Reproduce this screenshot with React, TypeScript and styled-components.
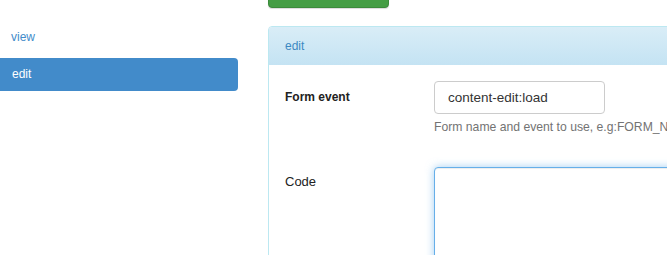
import React from "react";
import styled, { createGlobalStyle } from "styled-components";

const GlobalStyle = createGlobalStyle`
  html, body {
    margin: 0;
    padding: 0;
    overflow: hidden;
    background: #fff;
  }
  body {
    font-family: "Liberation Sans", Arial, sans-serif;
    font-size: 12px;
    line-height: 17px;
    color: #333;
  }
`;

const Page = styled.div`
  display: flex;
  align-items: flex-start;
  gap: 30px;
  width: 920px;
`;

const Sidebar = styled.ul`
  list-style: none;
  margin: 21px 0 0;
  padding: 0;
  flex: 0 0 238px;
  display: flex;
  flex-direction: column;
  gap: 4px;
`;

const NavItem = styled.li<{ $active?: boolean }>`
  height: 33px;
  display: flex;
  align-items: center;
  padding-left: ${(p) => (p.$active ? "12px" : "11px")};
  border-radius: 0 4px 4px 0;
  background: ${(p) => (p.$active ? "#428bca" : "transparent")};
  color: ${(p) => (p.$active ? "#fff" : "#428bca")};
  cursor: pointer;
`;

const Main = styled.div`
  flex: 0 0 620px;
  margin-top: -26px;
  display: flex;
  flex-direction: column;
  align-items: flex-start;
`;

const SaveButton = styled.button`
  flex-shrink: 0;
  width: 121px;
  height: 34px;
  border: 1px solid #3b8a3b;
  border-radius: 4px;
  background: #449d44;
  box-shadow: 0 1px 1px rgba(0, 0, 0, 0.15);
  color: #fff;
  font: inherit;
`;

const Panel = styled.div`
  flex-shrink: 0;
  margin-top: 18px;
  align-self: stretch;
  border: 1px solid #bce8f1;
  border-radius: 4px;
  background: #fff;
`;

const PanelHeading = styled.div`
  height: 38px;
  display: flex;
  align-items: center;
  padding: 0 16px;
  border-radius: 3px 3px 0 0;
  background: linear-gradient(to bottom, #d9edf7 0%, #c4e3f3 100%);
  color: #3d89c2;
`;

const PanelBody = styled.div`
  padding: 16px 16px 0;
`;

const FormRow = styled.div<{ $gap?: number }>`
  display: grid;
  grid-template-columns: 149px 1fr;
  margin-bottom: ${(p) => p.$gap ?? 0}px;
`;

const Label = styled.label<{ $bold?: boolean }>`
  padding-top: ${(p) => (p.$bold ? "8px" : "6px")};
  font-size: ${(p) => (p.$bold ? "12px" : "13px")};
  font-weight: ${(p) => (p.$bold ? 700 : 400)};
  color: #222;
`;

const Field = styled.div`
  display: flex;
  flex-direction: column;
  align-items: flex-start;
`;

const TextInput = styled.input`
  box-sizing: border-box;
  width: 171px;
  height: 33px;
  padding: 0 13px;
  border: 1px solid #ccc;
  border-radius: 4px;
  font-family: "Liberation Sans", Arial, sans-serif;
  font-size: 13.5px;
  color: #333;
  outline: none;
`;

const HelpText = styled.span`
  margin-top: 5px;
  font-size: 12.2px;
  color: #737373;
  white-space: nowrap;
`;

const CodeArea = styled.textarea`
  box-sizing: border-box;
  width: 400px;
  height: 140px;
  border: 1px solid #66afe9;
  border-radius: 4px;
  box-shadow: inset 0 1px 1px rgba(0, 0, 0, 0.075), 0 0 8px rgba(102, 175, 233, 0.6);
  outline: none;
  resize: none;
`;

export default function App() {
  return (
    <>
      <GlobalStyle />
      <Page>
        <Sidebar>
          <NavItem>view</NavItem>
          <NavItem $active>edit</NavItem>
        </Sidebar>
        <Main>
          <SaveButton />
          <Panel>
            <PanelHeading>edit</PanelHeading>
            <PanelBody>
              <FormRow $gap={31}>
                <Label $bold>Form event</Label>
                <Field>
                  <TextInput defaultValue="content-edit:load" />
                  <HelpText>Form name and event to use, e.g:FORM_NAME:load</HelpText>
                </Field>
              </FormRow>
              <FormRow>
                <Label>Code</Label>
                <Field>
                  <CodeArea />
                </Field>
              </FormRow>
            </PanelBody>
          </Panel>
        </Main>
      </Page>
    </>
  );
}
